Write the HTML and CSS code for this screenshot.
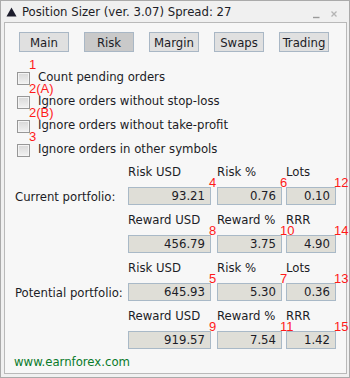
FILE: index.html
```html
<!DOCTYPE html>
<html lang="en">
<head>
    <meta charset="UTF-8">
    <meta name="viewport" content="width=device-width, initial-scale=1.0">
    <title>Position Sizer</title>
    <link rel="stylesheet" href="styles.css">
</head>
<body>
    <div class="ps-window">
        <!-- caption bar -->
        <div class="ps-caption">
            <svg class="ps-arrow" width="11" height="10" viewBox="0 0 11 10"><path d="M5.5 0.5 L10.5 9.5 L0.5 9.5 Z" fill="#1c1c2c"/></svg>
            <span class="ps-title">Position Sizer (ver. 3.07) Spread: 27</span>
            <svg class="ps-buttons" width="30" height="21" viewBox="0 0 30 21">
                <path d="M5 16.5 H11.5" stroke="#9a9a9a" stroke-width="1.4"/>
                <path d="M23.5 10.5 L28.5 15.5 M28.5 10.5 L23.5 15.5" stroke="#b4b4b4" stroke-width="1.3"/>
            </svg>
        </div>

        <div class="ps-panel">
            <div class="tabs">
                <button class="tab">Main</button>
                <button class="tab tab-active">Risk</button>
                <button class="tab">Margin</button>
                <button class="tab">Swaps</button>
                <button class="tab">Trading</button>
            </div>

            <div class="options">
                <div class="option"><span class="note">1</span><span class="check"></span><span class="option-text">Count pending orders</span></div>
                <div class="option"><span class="note">2(A)</span><span class="check"></span><span class="option-text">Ignore orders without stop-loss</span></div>
                <div class="option"><span class="note">2(B)</span><span class="check"></span><span class="option-text">Ignore orders without take-profit</span></div>
                <div class="option"><span class="note">3</span><span class="check"></span><span class="option-text">Ignore orders in other symbols</span></div>
            </div>

            <div class="stats">
                <div class="block">
                    <span></span><span class="head">Risk USD</span><span class="head">Risk %</span><span class="head">Lots</span>
                    <span class="row-label">Current portfolio:</span>
                    <div class="box box-wide">93.21<span class="num">4</span></div>
                    <div class="box box-mid">0.76<span class="num">6</span></div>
                    <div class="box box-small">0.10<span class="num">12</span></div>
                </div>
                <div class="block">
                    <span></span><span class="head">Reward USD</span><span class="head">Reward %</span><span class="head">RRR</span>
                    <span></span>
                    <div class="box box-wide">456.79<span class="num">8</span></div>
                    <div class="box box-mid">3.75<span class="num">10</span></div>
                    <div class="box box-small">4.90<span class="num">14</span></div>
                </div>
                <div class="block">
                    <span></span><span class="head">Risk USD</span><span class="head">Risk %</span><span class="head">Lots</span>
                    <span class="row-label">Potential portfolio:</span>
                    <div class="box box-wide">645.93<span class="num">5</span></div>
                    <div class="box box-mid">5.30<span class="num">7</span></div>
                    <div class="box box-small">0.36<span class="num">13</span></div>
                </div>
                <div class="block block-last">
                    <span></span><span class="head">Reward USD</span><span class="head">Reward %</span><span class="head">RRR</span>
                    <span></span>
                    <div class="box box-wide">919.57<span class="num">9</span></div>
                    <div class="box box-mid">7.54<span class="num">11</span></div>
                    <div class="box box-small">1.42<span class="num">15</span></div>
                </div>
            </div>

            <div class="footer">www.earnforex.com</div>
        </div>
    </div>
</body>
</html>
```

FILE: styles.css
```css
body {
    margin: 0;
    font-family: "DejaVu Sans Condensed", "DejaVu Sans", sans-serif;
    font-size: 13px;
    color: #1c1c26;
}

.ps-window {
    width: 350px;
    height: 378px;
    box-sizing: border-box;
    border: 1px solid #aaaaaa;
    background-color: #f0f0f0;
    padding: 0 2px 3px 3px;
    display: flex;
    flex-direction: column;
}

/* caption */
.ps-caption {
    height: 21px;
    display: flex;
    align-items: center;
}

.ps-arrow {
    margin-left: 2px;
    margin-right: 5px;
}

.ps-title {
    white-space: nowrap;
}

.ps-buttons {
    margin-left: auto;
    margin-right: 9px;
}

.ps-panel {
    flex: 1;
    border: 1px solid #b9b9b9;
    background-color: #f7f7f7;
    display: flex;
    flex-direction: column;
}

/* tabs */
.tabs {
    display: flex;
    gap: 15px;
    margin: 9px 0 0 14px;
}

.tab {
    width: 50px;
    height: 20px;
    padding: 0;
    font-family: inherit;
    font-size: 13px;
    color: #1c1c26;
    background-color: #e0e0e0;
    border: 1px solid #a9b7c5;
    border-radius: 0;
}

.tab-active {
    background-color: #c9c9c9;
}

/* check boxes */
.options {
    margin: 14px 0 0 12px;
}

.option {
    position: relative;
    height: 24px;
    display: flex;
    align-items: center;
}

.option-text {
    margin-bottom: 3px;
}

.check {
    width: 11px;
    height: 11px;
    border: 1px solid #979797;
    background: linear-gradient(#d8d8d8, #f2f2f2);
    box-shadow: inset 0 0 0 1px #f4f4f4;
    margin-right: 8px;
}

.note,
.num {
    position: absolute;
    font-family: "Liberation Sans", Arial, sans-serif;
    font-size: 13px;
    line-height: 13px;
    color: #ff1a1a;
    white-space: nowrap;
}

.note {
    left: 12px;
    top: -8px;
}

/* risk grid */
.stats {
    margin: 2px 0 0 10px;
}

.block {
    display: grid;
    grid-template-columns: 113px 89px 69px 50px;
    grid-template-rows: 23px 18px;
    margin-bottom: 7px;
}

.block-last {
    margin-bottom: 5px;
}

.head {
    line-height: 16px;
}

.row-label {
    align-self: center;
    white-space: nowrap;
}

.box {
    position: relative;
    box-sizing: border-box;
    height: 18px;
    line-height: 16px;
    text-align: right;
    padding-right: 5px;
    background-color: #dfded7;
    border: 1px solid #a9b9c7;
}

.box-wide { width: 83px; }
.box-mid { width: 65px; }
.box-small { width: 50px; }

.num {
    left: 100%;
    top: -12px;
    margin-left: -1px;
}

.footer {
    margin-left: 9px;
    line-height: 15px;
    color: #0a7a2a;
}
```
